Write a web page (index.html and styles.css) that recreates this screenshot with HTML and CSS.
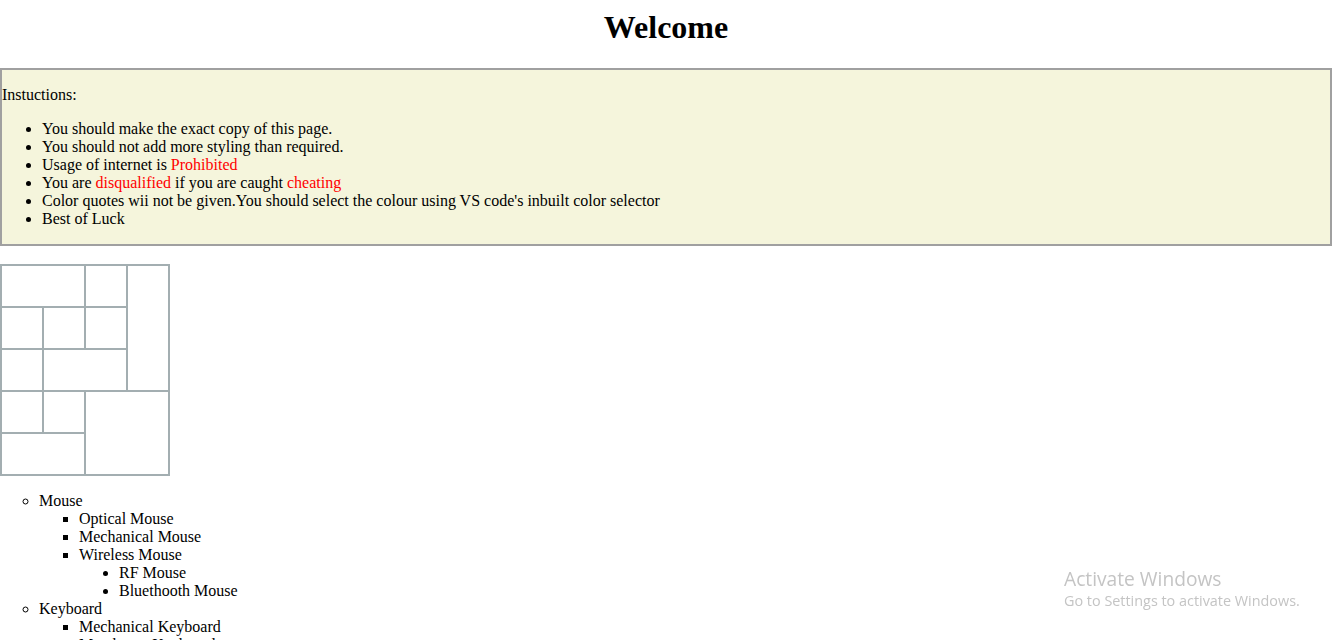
FILE: index.html
```html
<!DOCTYPE html>
<html>
<head>
<meta charset="utf-8">
<title>Welcome</title>
<link rel="stylesheet" href="styles.css">
</head>
<body>
<div class="page">
  <h1 class="title">Welcome</h1>
  <div class="instructions">
    <p class="label">Instuctions:</p>
    <ul class="rules">
      <li>You should make the exact copy of this page.</li>
      <li>You should not add more styling than required.</li>
      <li>Usage of internet is <span class="red">Prohibited</span></li>
      <li>You are <span class="red">disqualified</span> if you are caught <span class="red">cheating</span></li>
      <li>Color quotes wii not be given.You should select the colour using VS code's inbuilt color selector</li>
      <li>Best of Luck</li>
    </ul>
  </div>
  <br>
  <table class="grid">
    <tr><td colspan="2"></td><td></td><td rowspan="3"></td></tr>
    <tr><td></td><td></td><td></td></tr>
    <tr><td></td><td colspan="2"></td></tr>
    <tr><td></td><td></td><td colspan="2" rowspan="2"></td></tr>
    <tr><td colspan="2"></td></tr>
  </table>
  <ul class="l1">
    <li>Mouse
      <ul class="l2">
        <li>Optical Mouse</li>
        <li>Mechanical Mouse</li>
        <li>Wireless Mouse
          <ul class="l3">
            <li>RF Mouse</li>
            <li>Bluethooth Mouse</li>
          </ul>
        </li>
      </ul>
    </li>
    <li>Keyboard
      <ul class="l2">
        <li>Mechanical Keyboard</li>
        <li>Membrane Keyboard</li>
      </ul>
    </li>
  </ul>
</div>
<div class="watermark">
  <div class="wm-title">Activate Windows</div>
  <div class="wm-sub">Go to Settings to activate Windows.</div>
</div>
</body>
</html>
```
FILE: styles.css
```css
html, body {
  margin: 0;
  padding: 0;
  background: #ffffff;
}
body {
  font-family: "Liberation Serif", "Times New Roman", serif;
  font-size: 16px;
  color: #000;
}
.page {
  width: 1332px;
}
.title {
  text-align: center;
  font-size: 32px;
  font-weight: bold;
  margin: 9px 0 22px;
}
.instructions {
  background: #f5f5dc;
  border: 2px solid #a0a0a0;
}
.label {
  margin: 16px 0;
}
.rules {
  margin: 16px 0;
  padding-left: 40px;
  list-style: disc;
}
.red {
  color: #ff0000;
}
.grid {
  border-collapse: collapse;
  border: 2px solid #a3aeb1;
}
.grid td {
  border: 2px solid #a3aeb1;
  width: 40px;
  height: 40px;
  padding: 0;
}
.l1 {
  list-style: circle;
  margin: 16px 0;
  padding-left: 39px;
}
.l2 {
  list-style: square;
  padding-left: 40px;
  margin: 0;
}
.l3 {
  list-style: disc;
  padding-left: 40px;
  margin: 0;
}
.watermark {
  position: fixed;
  left: 1064px;
  top: 566px;
  color: #c4c4c4;
  font-family: "Open Sans", "Noto Sans", sans-serif;
}
.wm-title {
  font-size: 19.2px;
  line-height: 26px;
}
.wm-sub {
  font-size: 14.4px;
  line-height: 18px;
}
```
